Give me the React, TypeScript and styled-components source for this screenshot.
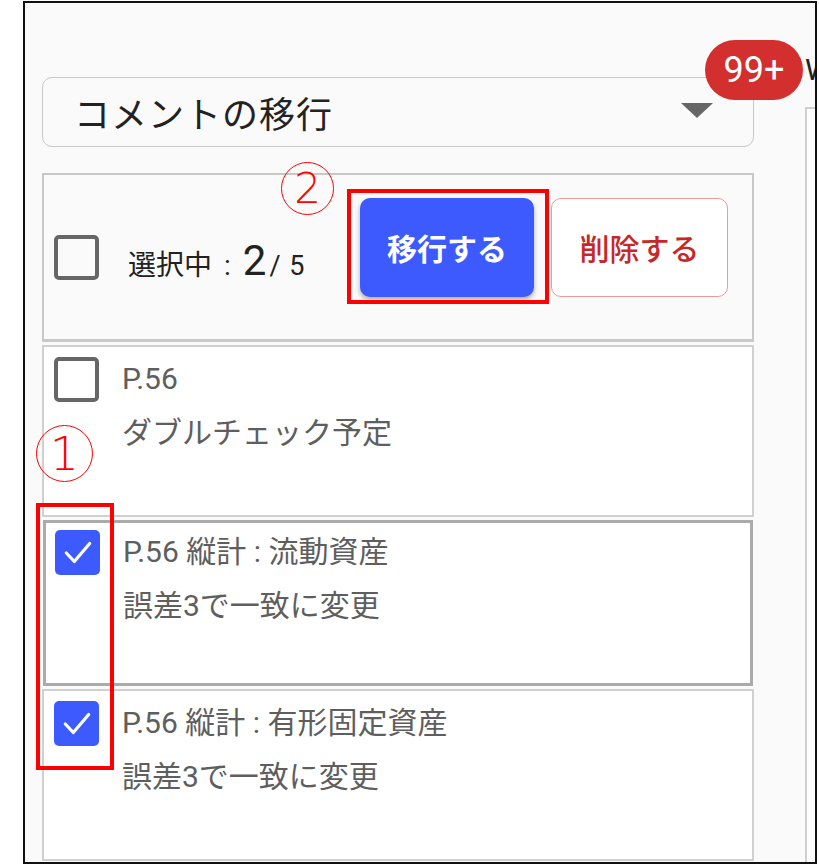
import React from "react";
import styled, { createGlobalStyle } from "styled-components";

const Global = createGlobalStyle`
  html, body { margin: 0; padding: 0; background: #ffffff; }
  body { font-family: "Roboto", "Noto Sans CJK JP", sans-serif; }
  * { box-sizing: border-box; }
`;

const Frame = styled.div`
  margin: 1px 0 0 23px;
  width: 794px;
  height: 863px;
  border: 2px solid #111;
  background: #fafafa;
  overflow: hidden;
  display: flex;
`;

const LeftColumn = styled.div`
  width: 712px;
  flex: none;
  margin-left: 17px;
  padding-top: 74px;
  display: flex;
  flex-direction: column;
`;

const RightColumn = styled.div`
  flex: none;
  width: 60px;
  margin-left: 51px;
  display: flex;
  flex-direction: column;
`;

const RightTitle = styled.div`
  margin-top: 47px;
  height: 40px;
  line-height: 40px;
  font-size: 30px;
  color: #222;
  white-space: nowrap;
`;

const RightPanel = styled.div`
  margin-top: 17px;
  flex: 1;
  border-left: 2px solid #cfcfcf;
  border-top: 2px solid #cfcfcf;
  background: #fdfdfd;
`;

const Dropdown = styled.div`
  position: relative;
  height: 70px;
  border: 1.5px solid #c8c8c8;
  border-radius: 10px;
  background: #fafafa;
  display: flex;
  align-items: center;
  padding-left: 31px;
  padding-right: 40px;
`;

const DropdownLabel = styled.span`
  font-size: 36px;
  color: #222;
  letter-spacing: 1px;
`;

const Caret = styled.span`
  margin-left: auto;
  margin-top: -4px;
  width: 0;
  height: 0;
  border-left: 16px solid transparent;
  border-right: 16px solid transparent;
  border-top: 15px solid #666;
`;

const Badge = styled.span`
  position: absolute;
  left: 662px;
  top: -38px;
  width: 98px;
  height: 60px;
  border-radius: 30px;
  background: #d32f2f;
  color: #fff;
  font-family: "Roboto", sans-serif;
  font-size: 36px;
  display: flex;
  align-items: center;
  justify-content: center;
`;

const Header = styled.div`
  position: relative;
  margin-top: 26px;
  height: 169px;
  border: 2px solid #c8c8c8;
  border-bottom-width: 3px;
  background: #fafafa;
  display: flex;
  align-items: center;
  padding-left: 10px;
  padding-right: 24px;
`;

const Box = styled.span<{ $checked?: boolean }>`
  flex: none;
  width: 45px;
  height: 45px;
  border-radius: 5px;
  border: ${(p) => (p.$checked ? "none" : "4px solid #666")};
  background: ${(p) => (p.$checked ? "#3d5afe" : "transparent")};
  display: flex;
  align-items: center;
  justify-content: center;
`;

const Count = styled.div`
  margin-left: 29px;
  margin-top: 6px;
  display: flex;
  align-items: baseline;
  color: #222;
  white-space: nowrap;
`;

const CountLabel = styled.span`
  font-size: 28px;
`;

const Colon = styled.span`
  font-size: 28px;
  margin-left: 12px;
`;

const CountValue = styled.span`
  font-size: 42px;
  margin-left: 12px;
`;

const CountTotal = styled.span`
  font-size: 27px;
  margin-left: 3px;
  word-spacing: 2px;
`;

const Buttons = styled.div`
  margin-left: auto;
  margin-bottom: 20px;
  display: flex;
  gap: 17px;
`;

const Marked = styled.div`
  position: relative;
`;

const MarkRect = styled.span`
  position: absolute;
  border: 4px solid #ff0000;
  pointer-events: none;
`;

const Button = styled.button<{ $variant: "primary" | "danger" }>`
  height: 99px;
  border-radius: 10px;
  font-family: "Roboto", "Noto Sans CJK JP", sans-serif;
  font-size: 30px;
  cursor: pointer;
  ${(p) =>
    p.$variant === "primary"
      ? `
    width: 174px;
    background: #3d5afe;
    color: #fff;
    font-weight: 700;
    border: none;
    box-shadow: 0 3px 5px rgba(0,0,0,0.3);
  `
      : `
    width: 177px;
    background: #fff;
    color: #c62828;
    font-weight: 500;
    border: 1.5px solid #ef9a9a;
  `}
`;

const CircleNum = styled.span<{ $size: number }>`
  position: absolute;
  width: ${(p) => p.$size}px;
  height: ${(p) => p.$size}px;
  border: 1.5px solid #ff0000;
  border-radius: 50%;
  color: #ff0000;
  font-family: "DejaVu Sans", sans-serif;
  font-weight: 300;
  font-size: ${(p) => Math.round(p.$size * 0.8)}px;
  line-height: 1;
  display: flex;
  align-items: center;
  justify-content: center;
  pointer-events: none;
`;

const List = styled.div`
  position: relative;
  margin-top: 3px;
  display: flex;
  flex-direction: column;
  gap: 3px;
`;

const Item = styled.div<{ $selected?: boolean; $h: number }>`
  height: ${(p) => p.$h}px;
  background: #fff;
  border: ${(p) => (p.$selected ? "3px solid #ababab" : "2px solid #d0d0d0")};
  margin: ${(p) => (p.$selected ? "0 1px" : "0")};
  display: flex;
  align-items: flex-start;
  padding: ${(p) => (p.$selected ? "7px 10px 0 9px" : "10px 10px 0 10px")};
`;

const ItemText = styled.div`
  margin-left: 23px;
  margin-top: -5px;
  font-size: 30px;
  line-height: 54px;
  color: #5e5e5e;
  white-space: nowrap;
`;

const Check = () => (
  <svg width="34" height="34" viewBox="0 0 32 32">
    <polyline
      points="5,16 12.5,24 27,7"
      fill="none"
      stroke="#fff"
      strokeWidth="3"
      strokeLinecap="round"
      strokeLinejoin="round"
    />
  </svg>
);

const items = [
  { title: "P.56", body: "ダブルチェック予定", checked: false, h: 172 },
  { title: "P.56 縦計 : 流動資産", body: "誤差3で一致に変更", checked: true, h: 166 },
  { title: "P.56 縦計 : 有形固定資産", body: "誤差3で一致に変更", checked: true, h: 172 },
];

export default function App() {
  return (
    <>
      <Global />
      <Frame>
        <LeftColumn>
          <Dropdown>
            <DropdownLabel>コメントの移行</DropdownLabel>
            <Caret />
            <Badge>99+</Badge>
          </Dropdown>
          <Header>
            <Box />
            <Count>
              <CountLabel>選択中</CountLabel>
              <Colon>:</Colon>
              <CountValue>2</CountValue>
              <CountTotal>/ 5</CountTotal>
            </Count>
            <Buttons>
              <Marked>
                <Button $variant="primary">移行する</Button>
                <MarkRect style={{ left: -13, top: -9, right: -15, bottom: -7 }} />
              </Marked>
              <Button $variant="danger">削除する</Button>
            </Buttons>
            <CircleNum $size={53} style={{ left: 237, top: -13 }}>2</CircleNum>
          </Header>
          <List>
            {items.map((it, i) => (
              <Item key={i} $selected={i === 1} $h={it.h}>
                <Box $checked={it.checked}>{it.checked && <Check />}</Box>
                <ItemText>
                  <div>{it.title}</div>
                  <div>{it.body}</div>
                </ItemText>
              </Item>
            ))}
            <CircleNum $size={57} style={{ left: -6, top: 80 }}>1</CircleNum>
            <MarkRect style={{ left: -6, top: 158, width: 78, height: 267 }} />
          </List>
        </LeftColumn>
        <RightColumn>
          <RightTitle>W</RightTitle>
          <RightPanel />
        </RightColumn>
      </Frame>
    </>
  );
}
